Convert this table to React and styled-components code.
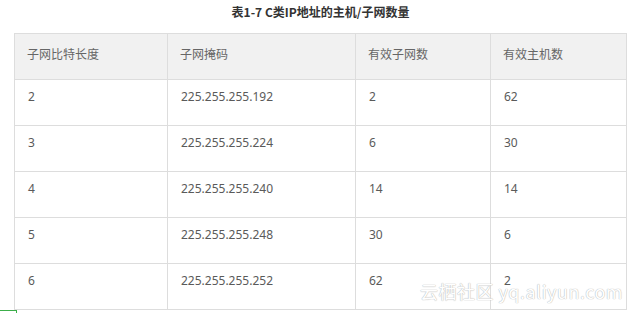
import React from 'react';
import styled, { createGlobalStyle } from 'styled-components';

const rows = [
  ['2', '225.255.255.192', '2', '62'],
  ['3', '225.255.255.224', '6', '30'],
  ['4', '225.255.255.240', '14', '14'],
  ['5', '225.255.255.248', '30', '6'],
  ['6', '225.255.255.252', '62', '2'],
];

const headers = ['子网比特长度', '子网掩码', '有效子网数', '有效主机数'];
const widths = [153, 188, 135, 136];

const App = () => {
  return (
    <Page>
      <GlobalStyle />
      <Title>表1-7 C类IP地址的主机/子网数量</Title>
      <Table>
        <colgroup>
          {widths.map((w, i) => (
            <col key={i} style={{ width: w }} />
          ))}
        </colgroup>
        <thead>
          <tr>
            {headers.map((h) => (
              <Th key={h}>{h}</Th>
            ))}
          </tr>
        </thead>
        <tbody>
          {rows.map((r, i) => (
            <tr key={i}>
              {r.map((c, j) => (
                <Td key={j}>{c}</Td>
              ))}
            </tr>
          ))}
        </tbody>
      </Table>
      <Watermark>云栖社区 yq.aliyun.com</Watermark>
      <Corner />
    </Page>
  );
};

export default App;

const GlobalStyle = createGlobalStyle`
  body {
    margin: 0;
    background: #ffffff;
    font-family: "Noto Sans", "Noto Sans CJK SC", sans-serif;
  }
`;

const Page = styled.div`
  position: relative;
  width: 635px;
  height: 313px;
  overflow: hidden;
  background: #fff;
`;

const Title = styled.div`
  text-align: center;
  font-size: 12px;
  font-weight: bold;
  color: #333;
  line-height: 16px;
  padding: 4px 0 0 6px;
  height: 33px;
  box-sizing: border-box;
  font-family: "Noto Sans CJK SC", sans-serif;
`;

const Table = styled.table`
  margin-left: 14px;
  width: 613px;
  border-collapse: collapse;
  table-layout: fixed;
  border: 1px solid #dddddd;
  font-size: 12px;
  color: #555;
`;

const Th = styled.th`
  background: #f1f1f1;
  border: 1px solid #dddddd;
  height: 46px;
  box-sizing: border-box;
  padding: 11px 12px 0 12px;
  text-align: left;
  vertical-align: top;
  font-weight: normal;
  line-height: 18px;
  color: #666;
  font-family: "Noto Sans CJK SC", sans-serif;
`;

const Td = styled.td`
  border: 1px solid #dddddd;
  height: 46px;
  box-sizing: border-box;
  padding: 8px 12px 0 13px;
  vertical-align: top;
  line-height: 18px;
  color: #5a5a5a;
`;

const Watermark = styled.div`
  position: absolute;
  right: 12px;
  top: 279px;
  font-size: 18px;
  line-height: 24px;
  color: #ffffff;
  font-family: "Noto Sans CJK SC", "Noto Sans", sans-serif;
  text-shadow: 0 0 1px #b8b8b8, 0 0 1px #b8b8b8;
  letter-spacing: 0.5px;
`;

const Corner = styled.span`
  position: absolute;
  left: 0;
  top: 310px;
  width: 16px;
  height: 3px;
  border-top: 1px solid #3cae4a;
  border-right: 1px solid #3cae4a;
`;
